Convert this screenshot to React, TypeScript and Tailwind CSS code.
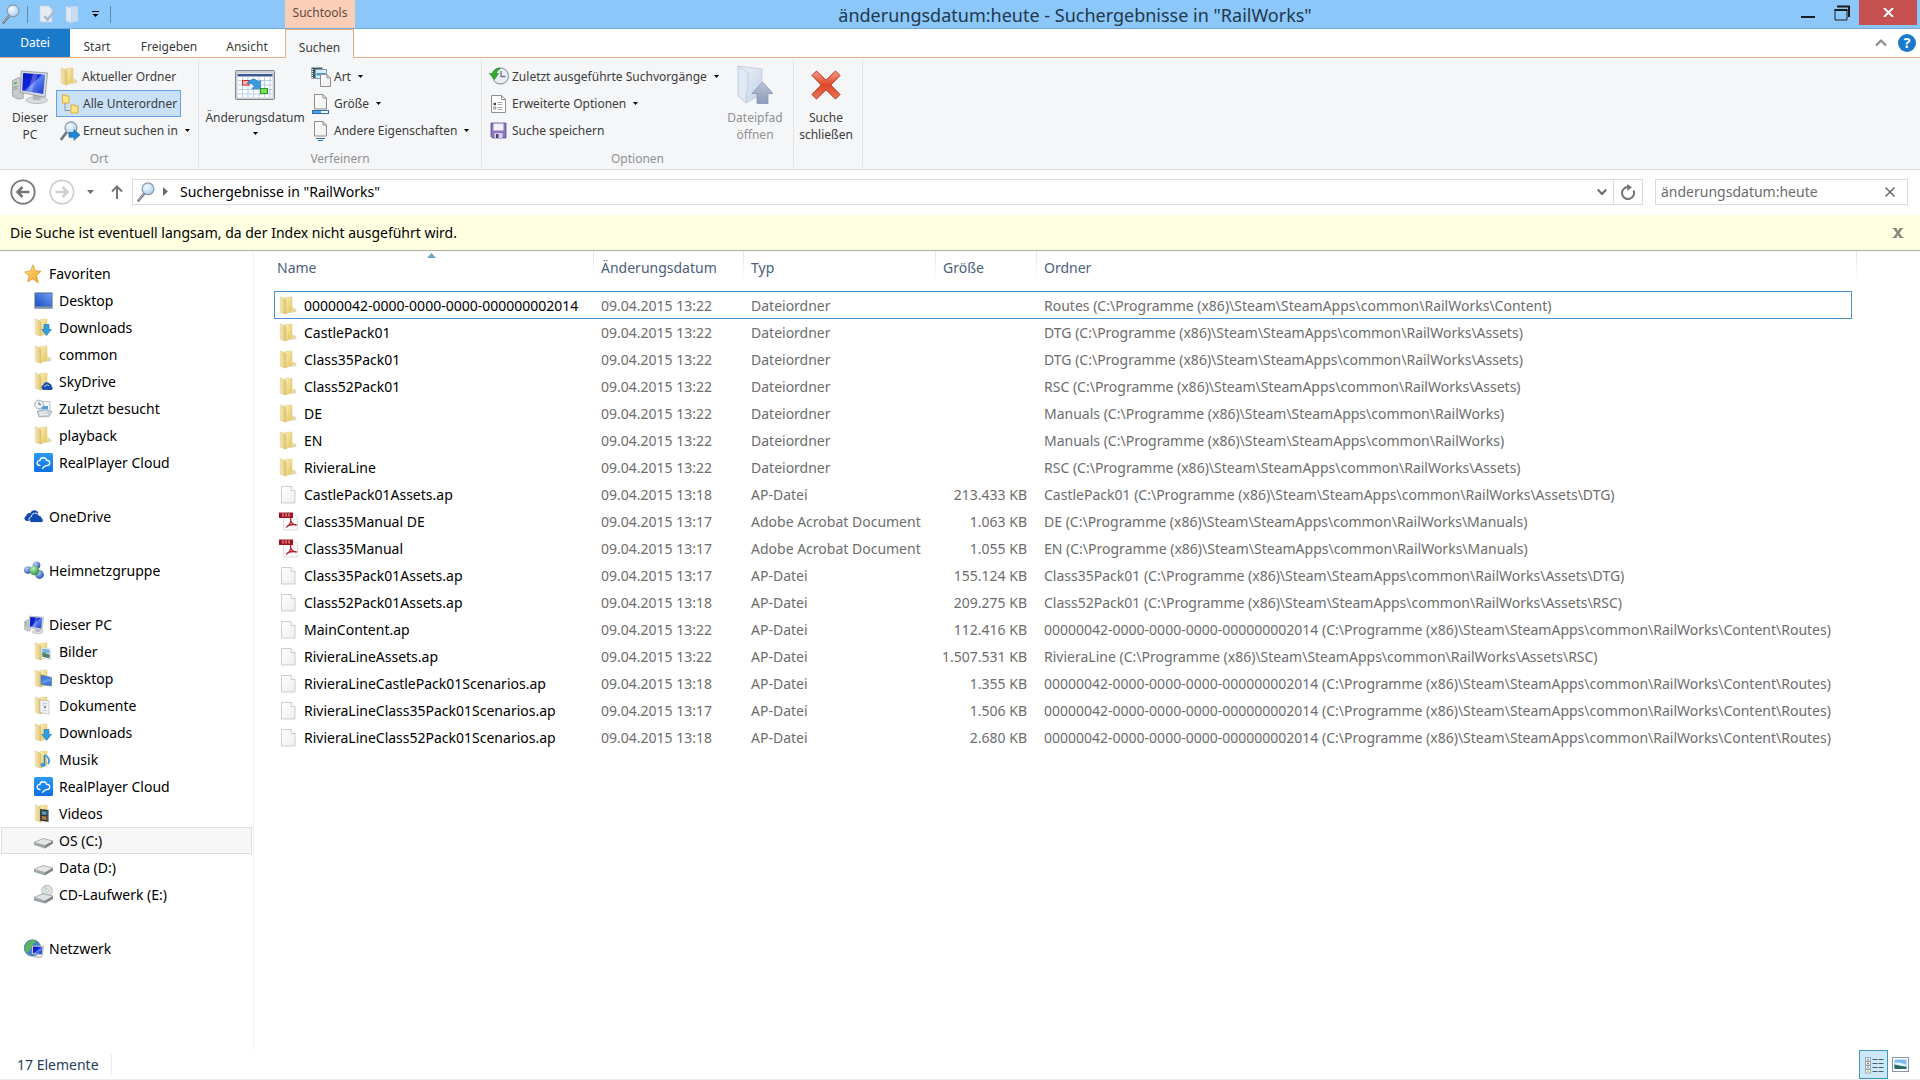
import type { ReactNode } from 'react';

type IconProps = { className?: string };

/* ---------- shared gradients ---------- */

const Gradients = () => (
  <svg className="absolute h-0 w-0" aria-hidden="true">
    <defs>
      <linearGradient id="folderBack" x1="0" y1="0" x2="1" y2="1">
        <stop offset="0" stopColor="#fbf0b8" />
        <stop offset="1" stopColor="#e3c25c" />
      </linearGradient>
      <linearGradient id="folderFront" x1="0" y1="0" x2="1" y2="0">
        <stop offset="0" stopColor="#f8ebb4" />
        <stop offset="1" stopColor="#dcc070" />
      </linearGradient>
      <linearGradient id="screen" x1="0" y1="0" x2="1" y2="1">
        <stop offset="0" stopColor="#0a14b8" />
        <stop offset="0.45" stopColor="#1226d8" />
        <stop offset="0.5" stopColor="#5b83f2" />
        <stop offset="1" stopColor="#1c33c9" />
      </linearGradient>
      <linearGradient id="desktopScreen" x1="0" y1="1" x2="1" y2="0">
        <stop offset="0" stopColor="#1a4ec8" />
        <stop offset="1" stopColor="#6f9ff0" />
      </linearGradient>
      <radialGradient id="lens" cx="0.4" cy="0.35" r="0.7">
        <stop offset="0" stopColor="#f2faff" />
        <stop offset="1" stopColor="#a9cdf0" />
      </radialGradient>
      <linearGradient id="star" x1="0" y1="0" x2="1" y2="1">
        <stop offset="0" stopColor="#ffe98a" />
        <stop offset="1" stopColor="#f39a1c" />
      </linearGradient>
      <linearGradient id="paper" x1="0" y1="0" x2="1" y2="1">
        <stop offset="0" stopColor="#ffffff" />
        <stop offset="1" stopColor="#eeeeee" />
      </linearGradient>
      <linearGradient id="redCross" x1="0" y1="0" x2="0" y2="1">
        <stop offset="0" stopColor="#f6a08a" />
        <stop offset="0.5" stopColor="#df4527" />
        <stop offset="1" stopColor="#ec7a5c" />
      </linearGradient>
      <linearGradient id="paleFolder" x1="0" y1="0" x2="1" y2="1">
        <stop offset="0" stopColor="#eef3fa" />
        <stop offset="1" stopColor="#c3d1e4" />
      </linearGradient>
      <linearGradient id="greyArrow" x1="0" y1="0" x2="0" y2="1">
        <stop offset="0" stopColor="#b9c4d6" />
        <stop offset="1" stopColor="#8d9cb8" />
      </linearGradient>
      <radialGradient id="ballBlue" cx="0.35" cy="0.3" r="0.8">
        <stop offset="0" stopColor="#bcd3ff" />
        <stop offset="1" stopColor="#1f43a8" />
      </radialGradient>
      <radialGradient id="ballGreen" cx="0.35" cy="0.3" r="0.8">
        <stop offset="0" stopColor="#b9f0b0" />
        <stop offset="1" stopColor="#1f8a35" />
      </radialGradient>
      <linearGradient id="rpc" x1="0" y1="0" x2="0" y2="1">
        <stop offset="0" stopColor="#2a9bf5" />
        <stop offset="1" stopColor="#0f6fe0" />
      </linearGradient>
    </defs>
  </svg>
);

/* ---------- icons ---------- */

const Folder = ({ children }: { children?: ReactNode }) => (
  <svg className="h-[19px] w-[19px] shrink-0" viewBox="0 0 19 19" aria-hidden="true">
    {!children && <path d="M11 17l6-1c1-1 .5-3-1-3.6l-3-1z" fill="#d9d6cc" />}
    <path d="M6 1.500l7-.5v14.500l-7 2.500z" fill="url(#folderBack)" stroke="#dcc67c" strokeWidth=".5" />
    {!children && <path d="M12.500 11.500c2 .3 3 1.500 3 4l-3 .8z" fill="#efd98a" />}
    <path d="M1.300.8l4.700 2.200c.8.4 1 1 1 2v13.200l-5.700-2z" fill="url(#folderFront)" stroke="#d9c37c" strokeWidth=".5" />
    {children}
  </svg>
);

const DownloadsIcon = () => (
  <Folder>
    <path d="M10 6.500h5v5h2.500L12.500 17.500 7.800 11.500H10z" fill="#2f9fe0" stroke="#1c74b5" strokeWidth=".6" />
  </Folder>
);

const SkyDriveIcon = () => (
  <Folder>
    <path d="M9.500 18a2.600 2.600 0 01-.3-5 3.600 3.600 0 016.300-1.500 3 3 0 012.200 3 2 2 0 01-.2 3.500z" fill="#1650a8" />
    <path d="M10.500 15c.6-2 3-2.600 4.500-1.300" fill="none" stroke="#fff" strokeWidth=".8" />
  </Folder>
);

const PicturesIcon = () => (
  <Folder>
    <path d="M7.500 5.500l9 1.500v11l-9-2z" fill="#fff" stroke="#b9c4cc" strokeWidth=".5" />
    <path d="M8.300 6.500l7.400 1.300v4l-7.400-1.200z" fill="#6db3e8" />
    <path d="M8.300 10l4 1.500 3.400 1v4l-7.400-1.700z" fill="#4d8064" />
  </Folder>
);

const FolderDesktopIcon = () => (
  <Folder>
    <path d="M7 6l10.500 2.500v8.500l-10.500-1.500z" fill="#3e7bdb" stroke="#6d7f94" strokeWidth=".8" />
    <path d="M7.500 12l9.500-3v3l-9.500 3z" fill="#76a6f0" opacity=".6" />
  </Folder>
);

const DocumentsIcon = () => (
  <Folder>
    <path d="M6 4l9 1v13l-9-1.600z" fill="#f4f6f8" stroke="#a4adb5" strokeWidth=".6" />
    <path d="M8 7l5 .6M8 9l5 .6M8 14l5 .8" stroke="#b3bac2" strokeWidth=".7" />
    <circle cx="11" cy="11.300" r="1" fill="#4468a8" />
  </Folder>
);

const MusicIcon = () => (
  <Folder>
    <path d="M10.500 5v9.500" stroke="#2b86cf" strokeWidth="1.600" />
    <path d="M10.500 5c4 1.500 6 5 3.500 9" fill="none" stroke="#3c9be0" strokeWidth="1.800" />
    <ellipse cx="9" cy="15" rx="2.600" ry="2" fill="#3c9be0" />
  </Folder>
);

const VideosIcon = () => (
  <Folder>
    <path d="M6 5l8.500 1v12l-8.500-1.500z" fill="#2d3438" />
    <path d="M8 7l4.500.5v3.500L8 10.500z" fill="#4e9cc4" />
    <path d="M8 12l4.500.5v3.500L8 15.500z" fill="#c07a3c" />
    <path d="M7 6v10.500M13.600 6.500v11" stroke="#9ba4a8" strokeWidth=".6" strokeDasharray="1 1" />
  </Folder>
);

const FileIcon = () => (
  <svg className="h-[19px] w-[19px] shrink-0" viewBox="0 0 19 19" aria-hidden="true">
    <path d="M2.500 1.500h9.500l4 4v12.500H2.500z" fill="url(#paper)" stroke="#c2c2c2" strokeWidth=".8" />
    <path d="M12 1.500v4h4" fill="#fff" stroke="#c2c2c2" strokeWidth=".8" />
  </svg>
);

const PdfIcon = () => (
  <svg className="h-[19px] w-[19px] shrink-0" viewBox="0 0 19 19" aria-hidden="true">
    <path d="M4.500 1.500h10l4 4v12.500h-14z" fill="#fbfbfb" stroke="#c8c8c8" strokeWidth=".6" />
    <path d="M0 .5h14v5.500H0z" fill="#a3121f" />
    <path d="M3 2h8M3 3.800h8" fill="none" stroke="#f3c9cc" strokeWidth=".8" strokeDasharray="2 1" />
    <path d="M11.500 6c1 4-1 8-4.500 9.500M11.700 9c1 2.500 3 4 6 4M7.500 14.500c3-2 6-2.400 10-1.800" fill="none" stroke="#b3202a" strokeWidth="1.300" />
  </svg>
);

const RealPlayerIcon = () => (
  <svg className="h-[19px] w-[19px] shrink-0" viewBox="0 0 19 19" aria-hidden="true">
    <rect width="19" height="19" rx="1.500" fill="url(#rpc)" />
    <path d="M6 12.500c-2.300 0-3.200-1.500-2.800-3 .4-1.400 1.600-2 2.600-1.900.4-2 2-3 3.800-2.800 1.700.1 2.700 1.200 3 2.400 2 0 3.300 1.300 3.100 3-.1 1.600-1.400 2.400-3 2.400-1 0-1.500.2-2.200.9l-2 1.800" fill="none" stroke="#fff" strokeWidth="1.400" strokeLinecap="round" />
  </svg>
);

const DesktopIcon = () => (
  <svg className="h-[19px] w-[19px] shrink-0" viewBox="0 0 19 19" aria-hidden="true">
    <rect x=".5" y="1.500" width="18" height="16" fill="#4b6a94" />
    <rect x="1.500" y="2.500" width="16" height="12.500" fill="url(#desktopScreen)" />
    <rect x=".5" y="15.500" width="18" height="2" fill="#7f97ad" />
  </svg>
);

const RecentIcon = () => (
  <svg className="h-[19px] w-[19px] shrink-0" viewBox="0 0 19 19" aria-hidden="true">
    <path d="M3 12l10-2 5 2.500-3 5-10 .5z" fill="#c7ccd1" stroke="#8d959c" strokeWidth=".6" />
    <path d="M7 2.500h9v9H6z" fill="#f4f7fa" stroke="#9aa5ae" strokeWidth=".6" />
    <path d="M8 7h6v3.500H7.500z" fill="#4c9fd4" />
    <circle cx="5" cy="5.500" r="4.300" fill="#eef2f5" stroke="#9aa5ae" strokeWidth=".9" />
    <path d="M5 3v2.500h2" fill="none" stroke="#56626c" strokeWidth=".9" />
    <path d="M5 14l8-1.500M6 16l8-1" stroke="#fff" strokeWidth="1" />
  </svg>
);

const StarIcon = () => (
  <svg className="h-5 w-5 shrink-0" viewBox="0 0 20 20" aria-hidden="true">
    <path d="M9 .8l2 6 6 .4-4.600 4.300 1.800 7.300-5.500-4-5 3.200 1.300-6.300L.6 8l5.600-.8z" fill="url(#star)" stroke="#d98f25" strokeWidth=".7" />
  </svg>
);

const OneDriveIcon = () => (
  <svg className="h-5 w-5 shrink-0" viewBox="0 0 20 20" aria-hidden="true">
    <path d="M5 14H2.800a2.700 2.700 0 01-.3-5.300c0-2 2-3.200 3.800-2.500C7.600 2.800 12.500 2 14.500 6" fill="#0f4bb0" />
    <path d="M7.500 15.500a2.900 2.900 0 01-.3-5.700 4 4 0 017.600-1.500 3.600 3.600 0 013.400 3.200 2.200 2.200 0 01-.4 4z" fill="#0f4bb0" stroke="#fff" strokeWidth=".9" />
  </svg>
);

const HomegroupIcon = () => (
  <svg className="h-5 w-5 shrink-0" viewBox="0 0 20 20" aria-hidden="true">
    <circle cx="12.500" cy="4.300" r="3.800" fill="url(#ballBlue)" />
    <circle cx="3.800" cy="9" r="3.800" fill="url(#ballBlue)" />
    <circle cx="15.500" cy="13.500" r="4.400" fill="url(#ballBlue)" />
    <circle cx="10.500" cy="9.500" r="4.800" fill="url(#ballGreen)" />
  </svg>
);

const PcIcon = ({ className = 'h-5 w-5' }: IconProps) => (
  <svg className={`${className} shrink-0`} viewBox="0 0 38 36" aria-hidden="true">
    <path d="M1 11l6-3 5 1v20l-5 1-6-3z" fill="#c9cbce" stroke="#8b8f94" strokeWidth=".7" />
    <path d="M2.500 13l3-1v2l-3 1z" fill="#49b04b" />
    <path d="M2 18l4-1M2 20l4-1" stroke="#777" strokeWidth=".7" />
    <ellipse cx="26" cy="31" rx="11" ry="3.500" fill="#d9dbde" stroke="#a3a7ab" strokeWidth=".7" />
    <path d="M22 25h8v6h-8z" fill="#b4b8bc" />
    <path d="M10 1l27 2-2.500 25L9 23z" fill="#d6d9dd" stroke="#8f959c" strokeWidth=".8" />
    <path d="M12 3l22.500 1.800-2 20L11 21z" fill="url(#screen)" />
    <path d="M22 4l5 .4-6 18-4-.6z" fill="#fff" opacity=".25" />
  </svg>
);

const DriveIcon = () => (
  <svg className="h-[19px] w-[19px] shrink-0" viewBox="0 0 19 19" aria-hidden="true">
    <path d="M0 11.500l9-4 10 2.500-8 4.500z" fill="#e6e7e8" stroke="#8e9194" strokeWidth=".7" />
    <path d="M0 11.500l11 3v3L0 14z" fill="#a4a7aa" />
    <path d="M11 14.500L19 10v2.500l-8 5z" fill="#818588" />
    <path d="M8.500 15.200l1.500.5" stroke="#5ccb4f" strokeWidth="1" />
  </svg>
);

const CdDriveIcon = () => (
  <svg className="h-[19px] w-[19px] shrink-0" viewBox="0 0 19 19" aria-hidden="true">
    <circle cx="13" cy="5.500" r="5.300" fill="#e1e6e2" stroke="#9aa19c" strokeWidth=".7" />
    <path d="M13 5.500L9 2.500a5 5 0 013-2z" fill="#b8dcae" />
    <circle cx="13" cy="5.500" r="1.500" fill="#fff" stroke="#9aa19c" strokeWidth=".6" />
    <path d="M0 12.500l9-4 10 2.500-8 5z" fill="#dfe0e1" stroke="#8e9194" strokeWidth=".7" />
    <path d="M0 12.500l11 3.500v2.500L0 15.500z" fill="#9da0a3" />
    <path d="M11 16l8-5v3l-8 4.500z" fill="#818588" />
  </svg>
);

const NetworkIcon = () => (
  <svg className="h-5 w-5 shrink-0" viewBox="0 0 20 20" aria-hidden="true">
    <circle cx="8.500" cy="9" r="8.300" fill="#3d86cf" stroke="#4a6f95" strokeWidth=".6" />
    <path d="M3 4c3-4 8-3.500 9-2 0 2-4 2-4 5s-4 4-4 8C1 13 0 8 3 4z" fill="#62b45b" />
    <path d="M8 6.500l11.500.6-.8 9L8 15z" fill="#d8dce0" stroke="#8b929a" strokeWidth=".5" />
    <path d="M9 7.500l9.500.5-.7 7.200L9 14.200z" fill="url(#screen)" />
    <ellipse cx="14" cy="18" rx="4.500" ry="1.300" fill="#cdd0d3" />
  </svg>
);

const Magnifier = ({ className = 'h-5 w-[18px]' }: IconProps) => (
  <svg className={`${className} shrink-0`} viewBox="0 0 18 20" aria-hidden="true">
    <path d="M7 12l-5.500 6.500" stroke="#6d7680" strokeWidth="2.600" strokeLinecap="round" />
    <path d="M6.500 12.200l-5 6" stroke="#b9c0c7" strokeWidth="1" strokeLinecap="round" />
    <circle cx="11" cy="6.800" r="5.900" fill="url(#lens)" stroke="#8b99a8" strokeWidth="1.200" />
  </svg>
);

const SearchAgainIcon = () => (
  <svg className="h-5 w-5 shrink-0" viewBox="0 0 20 20" aria-hidden="true">
    <path d="M6 12l-4.500 6" stroke="#6d7680" strokeWidth="2.800" strokeLinecap="round" />
    <circle cx="11" cy="6.800" r="6" fill="url(#lens)" stroke="#8b99a8" strokeWidth="1.200" />
    <path d="M9 11.500h5V8.600l6 5.400-6 5.300v-3H9z" fill="#1f86d6" stroke="#12609f" strokeWidth=".6" />
  </svg>
);

const SubfoldersIcon = () => (
  <svg className="h-5 w-5 shrink-0" viewBox="0 0 20 20" aria-hidden="true">
    <path d="M5 9v7.500h5" fill="none" stroke="#8c9299" strokeWidth="1" />
    <path d="M2.500 1h4v1h2.500v7h-6.500z" fill="#ffe58a" stroke="#d9a92c" strokeWidth=".9" />
    <path d="M11 11h4v1h3v7h-7z" fill="#ffe58a" stroke="#d9a92c" strokeWidth=".9" />
  </svg>
);

const CalendarIcon = () => (
  <svg className="h-[30px] w-10 shrink-0" viewBox="0 0 40 30" aria-hidden="true">
    <rect x=".5" y=".5" width="39" height="29" rx="1" fill="#c9ced4" stroke="#7f8790" />
    <rect x="2.500" y="3.500" width="35" height="24" fill="#fff" />
    <rect x="2.500" y="4" width="35" height="2.500" fill="#3a5a94" />
    <path d="M7.500 7v20M13 7v20M18.500 7v20M24 7v20M29.500 7v20M35 7v20M3 10.500h34M3 15h34M3 19.500h34M3 24h34" stroke="#b7cdea" />
    <rect x="7.500" y="10.500" width="6.500" height="4.500" fill="#fbb4b4" stroke="#d02a2a" />
    <rect x="25.500" y="18.500" width="7" height="5" fill="#7be05c" stroke="#2c9c22" />
    <path d="M12 13.500c3-5 9-5.500 11.500-1.500l2-1.800v8.600h-8.800l2.800-2.600c-1.500-2.800-4.500-3.500-7.500-2.700z" fill="#3a9be0" stroke="#1c6cb4" strokeWidth=".6" />
  </svg>
);

const KindIcon = () => (
  <svg className="h-5 w-5 shrink-0" viewBox="0 0 20 20" aria-hidden="true">
    <rect x=".5" y=".5" width="11" height="11" fill="#3f5d66" />
    <path d="M1.500 2v9M10.500 2v9" stroke="#fff" strokeDasharray="1 1" />
    <rect x="4.500" y="2.500" width="11" height="9" fill="#d8ecf8" stroke="#7e9aa8" />
    <path d="M5.500 6h9v2.500h-9z" fill="#4a9ad0" />
    <path d="M9.500 7.500h6.500l3.500 3.500v8.500h-10z" fill="url(#paper)" stroke="#8d8d8d" />
    <path d="M16 7.500v3.500h3.500" fill="none" stroke="#8d8d8d" />
  </svg>
);

const SizeIcon = () => (
  <svg className="h-5 w-5 shrink-0" viewBox="0 0 20 20" aria-hidden="true">
    <path d="M3.500.5h8.500l3.500 3.500v11h-12z" fill="url(#paper)" stroke="#8d8d8d" />
    <path d="M12 .5v3.500h3.500" fill="none" stroke="#8d8d8d" />
    <rect x="1.500" y="16.500" width="16" height="3" fill="#fff" stroke="#2b6cb0" />
    <rect x="2" y="17" width="8" height="2" fill="#4ba0e8" />
  </svg>
);

const PropertiesIcon = () => (
  <svg className="h-5 w-5 shrink-0" viewBox="0 0 20 20" aria-hidden="true">
    <path d="M3.500.5h8.500l3.500 3.500v11h-12z" fill="url(#paper)" stroke="#8d8d8d" />
    <path d="M12 .5v3.500h3.500" fill="none" stroke="#8d8d8d" />
    <path d="M5 17.500h9M7 19.500h5" stroke="#2b6cb0" />
  </svg>
);

const RecentSearchIcon = () => (
  <svg className="h-5 w-5 shrink-0" viewBox="0 0 20 20" aria-hidden="true">
    <circle cx="11.500" cy="9" r="8" fill="#e9eff4" stroke="#9da7b0" strokeWidth="1.300" />
    <path d="M12 4v5.500h4.500" fill="none" stroke="#6a7884" strokeWidth="1.300" />
    <path d="M10.500 1C6 1.500 4 4 3.500 6.500H.3L5.500 12.500l4-6H7.400C7.600 4.500 8.500 3.300 10.500 2.500z" fill="#2fae2a" stroke="#1c7d1a" strokeWidth=".6" />
  </svg>
);

const AdvancedIcon = () => (
  <svg className="h-5 w-5 shrink-0" viewBox="0 0 20 20" aria-hidden="true">
    <path d="M2.500 1.500h10l4 4v13h-14z" fill="#fff" stroke="#8d9196" />
    <path d="M12.500 1.500v4h4" fill="none" stroke="#8d9196" />
    <path d="M8.500 8.500h5M8.500 10.500h5M8.500 13.500h5M8.500 15.500h5" stroke="#8f959b" strokeWidth=".8" />
    <circle cx="5.800" cy="10" r="1.300" fill="#333" />
    <circle cx="5.800" cy="14" r="1.200" fill="none" stroke="#555" strokeWidth=".7" />
  </svg>
);

const SaveIcon = () => (
  <svg className="h-5 w-5 shrink-0" viewBox="0 0 20 20" aria-hidden="true">
    <path d="M2 2h15v15H3.500L2 15.500z" fill="#8a76c4" stroke="#5d4a96" strokeWidth=".8" />
    <path d="M4.500 2.500h10v7h-10z" fill="#f3f1f9" />
    <path d="M5.500 12h8v5h-8z" fill="#d6d1e6" />
    <path d="M7 13h2.500v4H7z" fill="#4b3c7d" />
  </svg>
);

const OpenPathIcon = () => (
  <svg className="h-10 w-9 shrink-0" viewBox="0 0 36 40" aria-hidden="true">
    <path d="M1 1l24 3v25l-16 9z" fill="url(#paleFolder)" stroke="#b4c2d6" strokeWidth=".7" />
    <path d="M1 1l8 5c1.500 1 2 2 2 4v14c-1.500 2-2 4-2 14l-8-7z" fill="#dfe8f3" stroke="#b4c2d6" strokeWidth=".7" />
    <path d="M25.500 17L36 28.500h-5v10H20v-10h-5z" fill="url(#greyArrow)" stroke="#8696b2" strokeWidth=".8" />
  </svg>
);

const CloseSearchIcon = () => (
  <svg className="h-[30px] w-[30px] shrink-0" viewBox="0 0 30 30" aria-hidden="true">
    <path d="M5.500 1L15 10.300 24.500 1 29 5.500 19.700 15 29 24.500 24.500 29 15 19.700 5.500 29 1 24.500 10.300 15 1 5.500z" fill="url(#redCross)" stroke="#b52c15" strokeWidth="1" strokeLinejoin="round" />
  </svg>
);

const Caret = ({ className = 'text-black' }: IconProps) => (
  <svg className={`${className} h-[3px] w-[5px] shrink-0`} viewBox="0 0 5 3" aria-hidden="true">
    <path d="M0 0h5L2.500 3z" fill="currentColor" />
  </svg>
);

/* ---------- data ---------- */

type NavItem = { label: string; icon: ReactNode; active?: boolean };
type NavGroup = { root: NavItem; items: NavItem[] };

const navGroups: NavGroup[] = [
  {
    root: { label: 'Favoriten', icon: <StarIcon /> },
    items: [
      { label: 'Desktop', icon: <DesktopIcon /> },
      { label: 'Downloads', icon: <DownloadsIcon /> },
      { label: 'common', icon: <Folder /> },
      { label: 'SkyDrive', icon: <SkyDriveIcon /> },
      { label: 'Zuletzt besucht', icon: <RecentIcon /> },
      { label: 'playback', icon: <Folder /> },
      { label: 'RealPlayer Cloud', icon: <RealPlayerIcon /> },
    ],
  },
  { root: { label: 'OneDrive', icon: <OneDriveIcon /> }, items: [] },
  { root: { label: 'Heimnetzgruppe', icon: <HomegroupIcon /> }, items: [] },
  {
    root: { label: 'Dieser PC', icon: <PcIcon /> },
    items: [
      { label: 'Bilder', icon: <PicturesIcon /> },
      { label: 'Desktop', icon: <FolderDesktopIcon /> },
      { label: 'Dokumente', icon: <DocumentsIcon /> },
      { label: 'Downloads', icon: <DownloadsIcon /> },
      { label: 'Musik', icon: <MusicIcon /> },
      { label: 'RealPlayer Cloud', icon: <RealPlayerIcon /> },
      { label: 'Videos', icon: <VideosIcon /> },
      { label: 'OS (C:)', icon: <DriveIcon />, active: true },
      { label: 'Data (D:)', icon: <DriveIcon /> },
      { label: 'CD-Laufwerk (E:)', icon: <CdDriveIcon /> },
    ],
  },
  { root: { label: 'Netzwerk', icon: <NetworkIcon /> }, items: [] },
];

type Kind = 'folder' | 'pdf' | 'ap';
type Row = { name: string; date: string; kind: Kind; size?: string; folder: string };

const base = 'C:\\Programme (x86)\\Steam\\SteamApps\\common\\RailWorks';
const guid = '00000042-0000-0000-0000-000000002014';

const typeNames: Record<Kind, string> = {
  folder: 'Dateiordner',
  pdf: 'Adobe Acrobat Document',
  ap: 'AP-Datei',
};

const rows: Row[] = [
  { name: guid, date: '09.04.2015 13:22', kind: 'folder', folder: `Routes (${base}\\Content)` },
  { name: 'CastlePack01', date: '09.04.2015 13:22', kind: 'folder', folder: `DTG (${base}\\Assets)` },
  { name: 'Class35Pack01', date: '09.04.2015 13:22', kind: 'folder', folder: `DTG (${base}\\Assets)` },
  { name: 'Class52Pack01', date: '09.04.2015 13:22', kind: 'folder', folder: `RSC (${base}\\Assets)` },
  { name: 'DE', date: '09.04.2015 13:22', kind: 'folder', folder: `Manuals (${base})` },
  { name: 'EN', date: '09.04.2015 13:22', kind: 'folder', folder: `Manuals (${base})` },
  { name: 'RivieraLine', date: '09.04.2015 13:22', kind: 'folder', folder: `RSC (${base}\\Assets)` },
  { name: 'CastlePack01Assets.ap', date: '09.04.2015 13:18', kind: 'ap', size: '213.433 KB', folder: `CastlePack01 (${base}\\Assets\\DTG)` },
  { name: 'Class35Manual DE', date: '09.04.2015 13:17', kind: 'pdf', size: '1.063 KB', folder: `DE (${base}\\Manuals)` },
  { name: 'Class35Manual', date: '09.04.2015 13:17', kind: 'pdf', size: '1.055 KB', folder: `EN (${base}\\Manuals)` },
  { name: 'Class35Pack01Assets.ap', date: '09.04.2015 13:17', kind: 'ap', size: '155.124 KB', folder: `Class35Pack01 (${base}\\Assets\\DTG)` },
  { name: 'Class52Pack01Assets.ap', date: '09.04.2015 13:18', kind: 'ap', size: '209.275 KB', folder: `Class52Pack01 (${base}\\Assets\\RSC)` },
  { name: 'MainContent.ap', date: '09.04.2015 13:22', kind: 'ap', size: '112.416 KB', folder: `${guid} (${base}\\Content\\Routes)` },
  { name: 'RivieraLineAssets.ap', date: '09.04.2015 13:22', kind: 'ap', size: '1.507.531 KB', folder: `RivieraLine (${base}\\Assets\\RSC)` },
  { name: 'RivieraLineCastlePack01Scenarios.ap', date: '09.04.2015 13:18', kind: 'ap', size: '1.355 KB', folder: `${guid} (${base}\\Content\\Routes)` },
  { name: 'RivieraLineClass35Pack01Scenarios.ap', date: '09.04.2015 13:17', kind: 'ap', size: '1.506 KB', folder: `${guid} (${base}\\Content\\Routes)` },
  { name: 'RivieraLineClass52Pack01Scenarios.ap', date: '09.04.2015 13:18', kind: 'ap', size: '2.680 KB', folder: `${guid} (${base}\\Content\\Routes)` },
];

/* ---------- title bar and tabs ---------- */

const TitleBar = () => (
  <header className="flex h-[29px] border-b border-[#74a9d8] bg-[#8cc7fa]">
    <div className="flex w-[285px] items-center pl-0.5">
      <Magnifier />
      <span className="ml-[7px] h-[17px] w-px bg-[#5f88ab]" />
      <button type="button" aria-label="Eigenschaften" className="ml-[11px]">
        <svg className="h-[18px] w-[18px]" viewBox="0 0 18 18" aria-hidden="true">
          <path d="M1 1h8.500l3.500 3.500V17H1z" fill="#e6ecf4" stroke="#c3cfdd" strokeWidth=".7" />
          <path d="M5.500 11l3 3.500L16 6" fill="none" stroke="#a9b9cf" strokeWidth="2.600" />
        </svg>
      </button>
      <button type="button" aria-label="Neuer Ordner" className="ml-2">
        <svg className="h-[19px] w-4" viewBox="0 0 16 19" aria-hidden="true">
          <path d="M5 1.500l8-.5v15l-8 2z" fill="#c9dcf2" stroke="#b3c8e0" strokeWidth=".5" />
          <path d="M1 1l4.500 2c.8.4 1 1 1 2v13L1 16z" fill="#dfe8f3" stroke="#b3c8e0" strokeWidth=".5" />
        </svg>
      </button>
      <button type="button" aria-label="Symbolleiste anpassen" className="flex w-[29px] justify-center">
        <svg className="h-[7px] w-[7px]" viewBox="0 0 7 7" aria-hidden="true">
          <path d="M0 .5h7" stroke="#000" />
          <path d="M.5 3h6l-3 3z" />
        </svg>
      </button>
      <span className="h-[17px] w-px bg-[#5f88ab]" />
    </div>
    <div className="flex w-[70px] justify-center bg-[#fcceb8] pt-1 text-[12px] leading-[18px] text-[#5e4a42]">Suchtools</div>
    <h1 className="flex-1 pt-0.5 text-center text-[18px] leading-[26px] text-[#22384c]">
      änderungsdatum:heute - Suchergebnisse in "RailWorks"
    </h1>
    <div className="flex pr-[3px]">
      <button type="button" aria-label="Minimieren" className="flex h-[25px] w-[26px] items-center justify-center">
        <svg className="h-4 w-4" viewBox="0 0 16 16" aria-hidden="true">
          <path d="M1 12h14" stroke="#1c1c1c" strokeWidth="2" />
        </svg>
      </button>
      <button type="button" aria-label="Wiederherstellen" className="flex h-[25px] w-[38px] items-center justify-center pl-1">
        <svg className="h-4 w-4" viewBox="0 0 16 16" aria-hidden="true">
          <path d="M3 1.500h12V12" fill="none" stroke="#1c1c1c" strokeWidth="2" />
          <path d="M1 5h12v10H1z" fill="none" stroke="#1c1c1c" />
          <path d="M.5 5h13" stroke="#1c1c1c" strokeWidth="2" />
        </svg>
      </button>
      <button type="button" aria-label="Schließen" className="flex h-[25px] w-[58px] items-center justify-center bg-[#c75050]">
        <svg className="h-[9px] w-[11px]" viewBox="0 0 11 9" aria-hidden="true">
          <path d="M1 0l9 9M10 0L1 9" stroke="#fff" strokeWidth="2" />
        </svg>
      </button>
    </div>
  </header>
);

const TabBar = () => (
  <div className="flex h-[29px] border-b border-[#e6ab80] bg-white text-[12px] leading-[28px] text-[#3b3b3b]">
    <button type="button" className="h-7 w-[70px] bg-[#1979ca] text-white">Datei</button>
    <button type="button" className="w-[54px] pt-1">Start</button>
    <button type="button" className="w-[90px] pt-1">Freigeben</button>
    <button type="button" className="mr-[5px] w-[66px] pt-1">Ansicht</button>
    <button type="button" className="-mb-px w-[69px] border-x border-t border-[#e6ab80] bg-[#f5f6f7] pt-1">Suchen</button>
    <div className="ml-auto flex items-center gap-[11px] pr-1">
      <button type="button" aria-label="Menüband minimieren">
        <svg className="h-3 w-3" viewBox="0 0 12 12" aria-hidden="true">
          <path d="M1 8.500l5-5 5 5" fill="none" stroke="#8c8c8c" strokeWidth="2.200" />
        </svg>
      </button>
      <button type="button" aria-label="Hilfe" className="h-[18px] w-[18px] rounded-full bg-[#1979ca] text-[14px] leading-[18px] font-bold text-white">?</button>
    </div>
  </div>
);

/* ---------- ribbon ---------- */

type SmallButtonProps = { icon: ReactNode; label: string; caret?: boolean; active?: boolean };

const SmallButton = ({ icon, label, caret, active }: SmallButtonProps) => (
  <button
    type="button"
    className={`flex h-[27px] items-center gap-[3px] border px-[3px] whitespace-nowrap ${
      active ? 'border-[#62a2e4] bg-[#c9e0f7]' : 'border-transparent'
    }`}
  >
    {icon}
    <span>{label}</span>
    {caret && <Caret className="ml-1 text-black" />}
  </button>
);

const RibbonGroup = ({ title, className, children }: { title?: string; className: string; children: ReactNode }) => (
  <section className={`my-0.5 flex shrink-0 flex-col justify-between border-r border-[#e1e3e6] ${className}`}>
    <div className="flex pt-[3px]">{children}</div>
    {title && <div className="text-center text-[12px] leading-4 text-[#8f9194]">{title}</div>}
  </section>
);

const Ribbon = () => (
  <div className="flex h-28 border-b border-[#d9dadb] bg-[#f5f6f7] text-[12px] leading-[17px] text-[#3b3b3b]">
    <RibbonGroup title="Ort" className="w-[199px]">
      <button type="button" className="flex w-14 flex-col items-center pt-[7px] pl-1">
        <PcIcon className="mb-1 h-[35px] w-[38px]" />
        Dieser
        <br />
        PC
      </button>
      <div className="flex flex-col items-start">
        <SmallButton icon={<Folder />} label="Aktueller Ordner" />
        <SmallButton icon={<SubfoldersIcon />} label="Alle Unterordner" active />
        <SmallButton icon={<SearchAgainIcon />} label="Erneut suchen in" caret />
      </div>
    </RibbonGroup>
    <RibbonGroup title="Verfeinern" className="w-[283px]">
      <button type="button" className="flex w-[108px] flex-col items-center pt-[7px] pl-1">
        <CalendarIcon />
        <span className="mt-[9px] mb-1.5">Änderungsdatum</span>
        <Caret />
      </button>
      <div className="flex flex-col items-start">
        <SmallButton icon={<KindIcon />} label="Art" caret />
        <SmallButton icon={<SizeIcon />} label="Größe" caret />
        <SmallButton icon={<PropertiesIcon />} label="Andere Eigenschaften" caret />
      </div>
    </RibbonGroup>
    <RibbonGroup title="Optionen" className="w-[312px]">
      <div className="flex w-[242px] flex-col items-start pl-[3px]">
        <SmallButton icon={<RecentSearchIcon />} label="Zuletzt ausgeführte Suchvorgänge" caret />
        <SmallButton icon={<AdvancedIcon />} label="Erweiterte Optionen" caret />
        <SmallButton icon={<SaveIcon />} label="Suche speichern" />
      </div>
      <button type="button" disabled className="flex w-[62px] flex-col items-center pt-0.5 text-[#8f9194]">
        <OpenPathIcon />
        <span className="mt-1">Dateipfad</span>
        öffnen
      </button>
    </RibbonGroup>
    <RibbonGroup className="w-[69px]">
      <button type="button" className="flex w-16 flex-col items-center pt-[7px]">
        <CloseSearchIcon />
        <span className="mt-[9px]">Suche</span>
        schließen
      </button>
    </RibbonGroup>
  </div>
);

/* ---------- address row ---------- */

const AddressRow = () => (
  <div className="flex h-[45px] items-center bg-white pr-3 pb-0.5 pl-2.5 text-[14px]">
    <button type="button" aria-label="Zurück">
      <svg className="h-[26px] w-[26px]" viewBox="0 0 26 26" aria-hidden="true">
        <circle cx="13" cy="13" r="11.700" fill="none" stroke="#767676" strokeWidth="1.800" />
        <path d="M19.500 13H8M12.500 8l-5 5 5 5" fill="none" stroke="#767676" strokeWidth="2.600" />
      </svg>
    </button>
    <button type="button" aria-label="Vorwärts" className="ml-[13px]">
      <svg className="h-[26px] w-[26px]" viewBox="0 0 26 26" aria-hidden="true">
        <circle cx="13" cy="13" r="11.700" fill="none" stroke="#cfcfcf" strokeWidth="1.800" />
        <path d="M6.500 13H18M13.500 8l5 5-5 5" fill="none" stroke="#cfcfcf" strokeWidth="2.600" />
      </svg>
    </button>
    <button type="button" aria-label="Verlauf" className="ml-3 text-[#6b6b6b]">
      <svg className="h-1 w-[7px]" viewBox="0 0 7 4" aria-hidden="true">
        <path d="M0 0h7L3.500 4z" fill="currentColor" />
      </svg>
    </button>
    <button type="button" aria-label="Nach oben" className="ml-[17px]">
      <svg className="h-3.5 w-3" viewBox="0 0 12 14" aria-hidden="true">
        <path d="M6 14V2M1 6.500l5-5 5 5" fill="none" stroke="#757575" strokeWidth="2" />
      </svg>
    </button>
    <div className="ml-[9px] flex h-[26px] flex-1 items-center border border-[#d9d9d9] pl-1">
      <Magnifier />
      <svg className="ml-2 h-[9px] w-[5px]" viewBox="0 0 5 9" aria-hidden="true">
        <path d="M0 0l5 4.500L0 9z" fill="#6b6b6b" />
      </svg>
      <button type="button" className="ml-3 text-black">Suchergebnisse in "RailWorks"</button>
      <button type="button" aria-label="Vorherige Orte" className="ml-auto flex w-[22px] justify-center">
        <svg className="h-2 w-2.5" viewBox="0 0 10 8" aria-hidden="true">
          <path d="M.8 1.500L5 6l4.200-4.500" fill="none" stroke="#6b6b6b" strokeWidth="2" />
        </svg>
      </button>
      <button type="button" aria-label="Aktualisieren" className="flex h-full w-[29px] items-center justify-center border-l border-[#d9d9d9]">
        <svg className="h-4 w-4" viewBox="0 0 16 16" aria-hidden="true">
          <path d="M13.500 6.500A6 6 0 118 3" fill="none" stroke="#757575" strokeWidth="2" />
          <path d="M7 0l5 3.200L7.500 7z" fill="#757575" />
        </svg>
      </button>
    </div>
    <div className="ml-3 flex h-[26px] w-[253px] items-center border border-[#d9d9d9] pr-3 pl-[5px]">
      <input type="text" aria-label="Suchen" defaultValue="änderungsdatum:heute" className="min-w-0 flex-1 text-[#6b6b6b] outline-none" />
      <button type="button" aria-label="Suche löschen">
        <svg className="h-2.5 w-2.5" viewBox="0 0 10 10" aria-hidden="true">
          <path d="M.5.5l9 9M9.500.5l-9 9" stroke="#6b6b6b" strokeWidth="1.500" />
        </svg>
      </button>
    </div>
  </div>
);

const InfoBar = () => (
  <div className="flex h-9 items-center justify-between border-b border-[#acaca4] bg-[#ffffe1] pr-4 pl-2.5 text-[14px] text-black">
    <p>Die Suche ist eventuell langsam, da der Index nicht ausgeführt wird.</p>
    <button type="button" aria-label="Hinweis schließen">
      <svg className="h-2.5 w-3" viewBox="0 0 12 10" aria-hidden="true">
        <path d="M2.500 0l7 10M9.500 0l-7 10" stroke="#8a8a80" strokeWidth="2.600" />
        <path d="M.5.5h4M7.500.5h4M.5 9.500h4M7.500 9.500h4" stroke="#8a8a80" />
      </svg>
    </button>
  </div>
);

/* ---------- body ---------- */

const NavLink = ({ item, nested }: { item: NavItem; nested?: boolean }) => (
  <a
    href="#"
    className={`mr-px ml-px flex h-[27px] items-center border text-black ${nested ? 'gap-1.5 pl-8' : 'gap-[5px] pl-[22px]'} ${
      item.active ? 'border-[#dedede] bg-[#f7f7f7]' : 'border-transparent'
    }`}
  >
    {item.icon}
    {item.label}
  </a>
);

const Sidebar = () => (
  <nav className="flex w-[254px] shrink-0 flex-col gap-[27px] border-r border-[#f0f0f0] pt-[9px] text-[14px]">
    {navGroups.map((group) => (
      <div key={group.root.label}>
        <NavLink item={group.root} />
        {group.items.map((item) => (
          <NavLink key={item.label} item={item} nested />
        ))}
      </div>
    ))}
  </nav>
);

const columns = [
  { label: 'Name', width: 'w-[320px]', pad: 'pl-[3px]' },
  { label: 'Änderungsdatum', width: 'w-[150px]', pad: 'pl-[7px]' },
  { label: 'Typ', width: 'w-[192px]', pad: 'pl-[7px]' },
  { label: 'Größe', width: 'w-[101px]', pad: 'pl-[7px]' },
  { label: 'Ordner', width: '', pad: 'pl-[7px]' },
];

const FileTable = () => (
  <table className="w-full table-fixed border-separate border-spacing-0 text-[14px] whitespace-nowrap">
    <thead>
      <tr>
        {columns.map((col, i) => (
          <th key={col.label} scope="col" className={`h-10 p-0 align-top font-normal ${col.width}`}>
            <div className="relative flex h-[33px] items-center justify-between">
              <button type="button" className={`text-[#4c607a] ${col.pad}`}>{col.label}</button>
              {i === 0 && (
                <svg className="absolute top-0.5 left-[153px] h-[5px] w-[9px]" viewBox="0 0 9 5" aria-hidden="true">
                  <path d="M4.500 0L9 5H0z" fill="#6fa3bf" />
                </svg>
              )}
              {i < 4 && <span className="mb-1 h-[29px] w-px bg-linear-to-b from-[#dfe3ec] to-white" />}
            </div>
          </th>
        ))}
        <td className="w-[5px] p-0 align-top">
          <span className="ml-auto block h-[29px] w-px bg-linear-to-b from-[#dfe3ec] to-white" />
        </td>
      </tr>
    </thead>
    <tbody className="text-[#6d6d6d]">
      {rows.map((row, i) => {
        const line = i === 0 ? 'border-y border-[#4a90d0]' : '';
        return (
          <tr key={row.name} className={i === 0 ? 'h-7' : 'h-[27px]'}>
            <td className={`p-0 text-black ${line} ${i === 0 ? 'border-l pl-1' : 'pl-[5px]'}`}>
              <span className="flex items-center gap-1.5">
                {row.kind === 'folder' && <Folder />}
                {row.kind === 'pdf' && <PdfIcon />}
                {row.kind === 'ap' && <FileIcon />}
                {row.name}
              </span>
            </td>
            <td className={`p-0 pl-[7px] ${line}`}>{row.date}</td>
            <td className={`p-0 pl-[7px] ${line}`}>{typeNames[row.kind]}</td>
            <td className={`p-0 pr-2.5 text-right ${line}`}>{row.size}</td>
            <td className={`p-0 pl-[7px] ${line} ${i === 0 ? 'border-r' : ''}`}>{row.folder}</td>
            <td className="p-0" />
          </tr>
        );
      })}
    </tbody>
  </table>
);

const StatusBar = () => (
  <footer className="flex h-[30px] border-b border-[#ececec] bg-white text-[14px] text-[#263c5c]">
    <span className="my-1 flex items-center border-r border-[#ececec] pr-3 pl-[17px]">17 Elemente</span>
    <div className="ml-auto flex items-center gap-1 pr-[11px]">
      <button type="button" aria-label="Details" className="flex h-[29px] w-[29px] items-center justify-center border border-[#3f95bd] bg-[#cbe8f6]">
        <svg className="h-[18px] w-5" viewBox="0 0 20 18" aria-hidden="true">
          <path d="M1.500 1.500h5v3.500h-5zM1.500 5.500h5v3.500h-5zM1.500 9.500h5v3.500h-5zM1.500 13.500h5v3.500h-5z" fill="#fff" stroke="#8292a0" strokeWidth=".8" />
          <path d="M3 3.200h2" stroke="#4a78b8" />
          <path d="M3 7.200h2" stroke="#c8382c" />
          <path d="M3 11.200h2" stroke="#4a78b8" />
          <path d="M3 15.200h2" stroke="#a8b83c" />
          <path d="M8.500 3.500h5M14.500 3.500h5M8.500 7.500h5M14.500 7.500h5M8.500 11.500h5M14.500 11.500h5M8.500 15.500h5M14.500 15.500h5" stroke="#4a5b70" />
        </svg>
      </button>
      <button type="button" aria-label="Große Symbole">
        <svg className="h-[15px] w-[17px]" viewBox="0 0 17 15" aria-hidden="true">
          <rect x=".5" y=".5" width="16" height="14" fill="#fff" stroke="#8a96a8" />
          <rect x="2.500" y="2.500" width="12" height="9.500" fill="#7fbdf0" />
          <path d="M2.500 6c4-1 8 0 12 2v1h-12z" fill="#e2f3fa" />
          <path d="M2.500 7.500c4 1 8 1.500 12 2.500v2h-12z" fill="#2c6c68" />
        </svg>
      </button>
    </div>
  </footer>
);

export default function App() {
  return (
    <div className="flex min-h-screen flex-col bg-white font-['Noto_Sans','Open_Sans',sans-serif]">
      <Gradients />
      <TitleBar />
      <TabBar />
      <Ribbon />
      <AddressRow />
      <InfoBar />
      <div className="flex flex-1">
        <Sidebar />
        <main className="min-w-0 flex-1 pr-[63px] pl-5">
          <FileTable />
        </main>
      </div>
      <StatusBar />
    </div>
  );
}
